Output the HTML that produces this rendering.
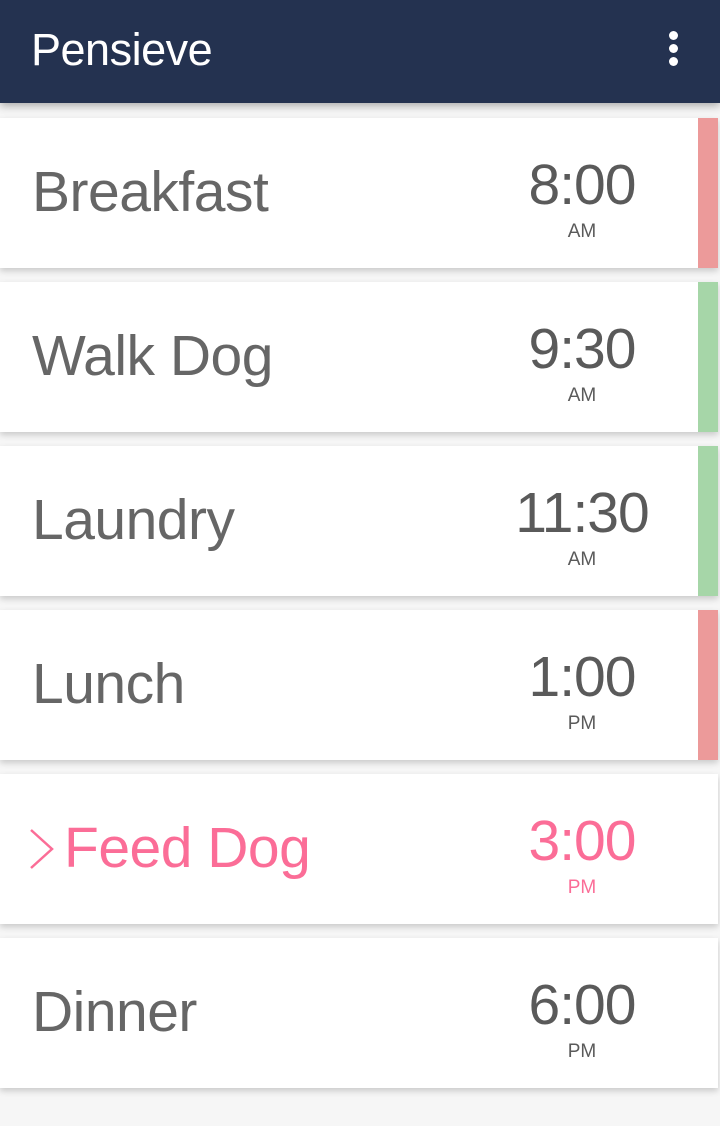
<!DOCTYPE html>
<html><head><meta charset="utf-8"><style>
*{margin:0;padding:0;box-sizing:border-box}
body{width:720px;height:1126px;background:#f6f6f6;font-family:"Liberation Sans",sans-serif;overflow:hidden;position:relative}
.hdr{position:absolute;left:0;top:0;width:720px;height:103px;background:#243250;box-shadow:0 3px 8px rgba(0,0,0,.3)}
.hdr .t{position:absolute;left:31px;top:24px;color:#fff;font-size:45px;letter-spacing:-0.5px}
.dots{position:absolute;left:669px;top:31px}
.dots i{display:block;width:9px;height:9px;border-radius:50%;background:#fff;margin-bottom:4px}
.card{position:absolute;left:0;width:718px;height:150px;background:#fff;box-shadow:0 3px 6px rgba(0,0,0,.18)}
.stripe{position:absolute;right:0;top:0;width:20px;height:150px}
.name{position:absolute;left:32px;top:46px;font-size:57px;color:#666;white-space:nowrap;line-height:1;letter-spacing:-0.5px}
.time{position:absolute;left:482px;width:200px;text-align:center;top:39px;font-size:57px;color:#5a5a5a;line-height:1;letter-spacing:-1px}
.ap{position:absolute;left:482px;width:200px;text-align:center;top:104px;font-size:19px;color:#5a5a5a;line-height:1}
.pink{color:#fb6d97}
</style></head><body>
<div class="hdr"><div class="t">Pensieve</div><div class="dots"><i></i><i></i><i></i></div></div>

<div class="card" style="top:118px"><div class="name">Breakfast</div><div class="time">8:00</div><div class="ap">AM</div><div class="stripe" style="background:#ec9a9a"></div></div>
<div class="card" style="top:282px"><div class="name">Walk Dog</div><div class="time">9:30</div><div class="ap">AM</div><div class="stripe" style="background:#a6d6a8"></div></div>
<div class="card" style="top:446px"><div class="name">Laundry</div><div class="time">11:30</div><div class="ap">AM</div><div class="stripe" style="background:#a6d6a8"></div></div>
<div class="card" style="top:610px"><div class="name">Lunch</div><div class="time">1:00</div><div class="ap">PM</div><div class="stripe" style="background:#ec9a9a"></div></div>
<div class="card" style="top:774px"><svg style="position:absolute;left:29px;top:54px" width="26" height="42" viewBox="0 0 26 42"><path d="M2 2 L23 21 L2 40" fill="none" stroke="#fb6d97" stroke-width="2.5"/></svg><div class="name pink" style="left:64px">Feed Dog</div><div class="time pink">3:00</div><div class="ap pink">PM</div></div>
<div class="card" style="top:938px"><div class="name">Dinner</div><div class="time">6:00</div><div class="ap">PM</div></div>
</body></html>
